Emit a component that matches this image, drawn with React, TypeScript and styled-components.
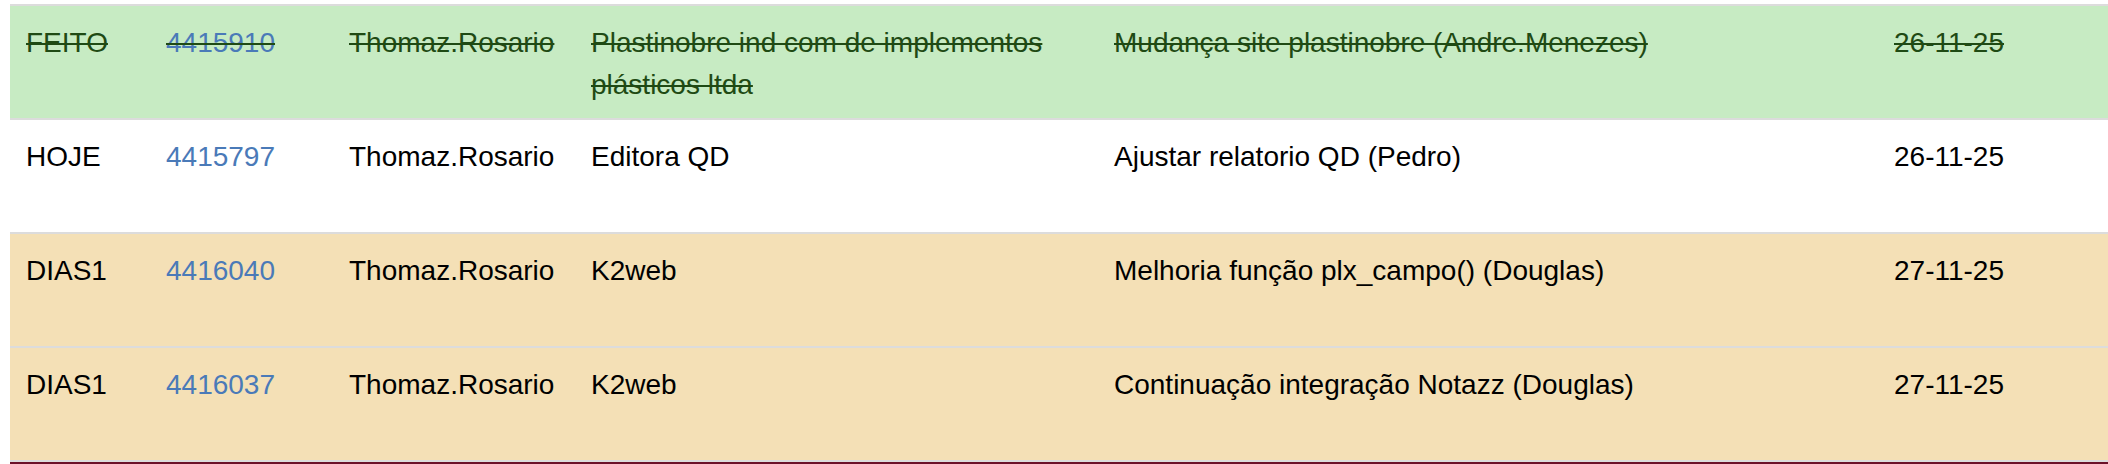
import React from 'react';
import styled, { createGlobalStyle, css } from 'styled-components';

type Status = 'done' | 'today' | 'soon';

interface Task {
  tag: string;
  ticket: string;
  user: string;
  client: string;
  description: string;
  date: string;
  status: Status;
}

const tasks: Task[] = [
  {
    tag: 'FEITO',
    ticket: '4415910',
    user: 'Thomaz.Rosario',
    client: 'Plastinobre ind com de implementos plásticos ltda',
    description: 'Mudança site plastinobre (Andre.Menezes)',
    date: '26-11-25',
    status: 'done',
  },
  {
    tag: 'HOJE',
    ticket: '4415797',
    user: 'Thomaz.Rosario',
    client: 'Editora QD',
    description: 'Ajustar relatorio QD (Pedro)',
    date: '26-11-25',
    status: 'today',
  },
  {
    tag: 'DIAS1',
    ticket: '4416040',
    user: 'Thomaz.Rosario',
    client: 'K2web',
    description: 'Melhoria função plx_campo() (Douglas)',
    date: '27-11-25',
    status: 'soon',
  },
  {
    tag: 'DIAS1',
    ticket: '4416037',
    user: 'Thomaz.Rosario',
    client: 'K2web',
    description: 'Continuação integração Notazz (Douglas)',
    date: '27-11-25',
    status: 'soon',
  },
];

const GlobalStyle = createGlobalStyle`
  html, body {
    margin: 0;
    padding: 0;
    background: #ffffff;
    overflow: hidden;
  }
  body {
    font-family: "Liberation Sans", Arial, Helvetica, sans-serif;
  }
`;

const Page = styled.div`
  padding: 4px 0 0 10px;
  width: 2300px;
`;

const TaskList = styled.div`
  display: flex;
  flex-direction: column;
  border-bottom: 2px solid #dcdcdc;
`;

const rowColors = {
  done: css`
    background: #c7ebc3;
    color: #1f4a14;
    text-decoration: line-through;
    text-decoration-thickness: 2px;
  `,
  today: css`
    background: #ffffff;
    color: #000000;
  `,
  soon: css`
    background: #f4e0b6;
    color: #000000;
  `,
};

const Row = styled.div<{ $status: Status }>`
  display: grid;
  grid-template-columns: 140px 183px 242px 523px 780px 1fr;
  height: 112px;
  border-top: 2px solid #dcdcdc;
  font-size: 28px;
  line-height: 42px;
  ${({ $status }) => rowColors[$status]}
`;

const Cell = styled.div`
  padding: 16px 16px 0;
  min-width: 0;
`;

const TicketLink = styled.a`
  color: #4a7ab8;
  text-decoration: none;
  cursor: pointer;
`;

const BottomBar = styled.div`
  height: 40px;
  background: #6c1129;
`;

const App: React.FunctionComponent = () => {
  const renderedRows = tasks.map((task) => (
    <Row key={task.ticket} $status={task.status}>
      <Cell>{task.tag}</Cell>
      <Cell>
        <TicketLink href="#">{task.ticket}</TicketLink>
      </Cell>
      <Cell>{task.user}</Cell>
      <Cell>{task.client}</Cell>
      <Cell>{task.description}</Cell>
      <Cell>{task.date}</Cell>
    </Row>
  ));

  return (
    <>
      <GlobalStyle />
      <Page>
        <TaskList>{renderedRows}</TaskList>
        <BottomBar />
      </Page>
    </>
  );
};

export default App;
